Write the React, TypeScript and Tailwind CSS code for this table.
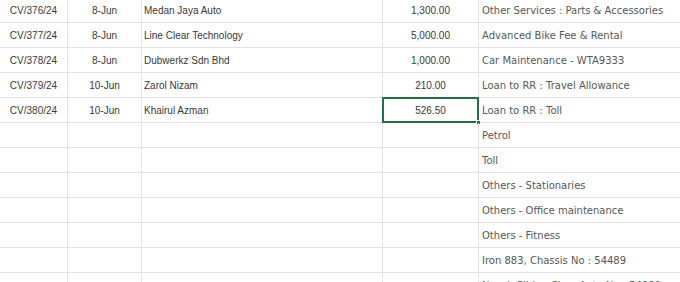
import React from "react";

type Row = { a: string; b: string; c: string; d: string; e: string };

const rows: Row[] = [
  { a: "CV/376/24", b: "8-Jun", c: "Medan Jaya Auto", d: "1,300.00", e: "Other Services : Parts & Accessories" },
  { a: "CV/377/24", b: "8-Jun", c: "Line Clear Technology", d: "5,000.00", e: "Advanced Bike Fee & Rental" },
  { a: "CV/378/24", b: "8-Jun", c: "Dubwerkz Sdn Bhd", d: "1,000.00", e: "Car Maintenance - WTA9333" },
  { a: "CV/379/24", b: "10-Jun", c: "Zarol Nizam", d: "210.00", e: "Loan to RR : Travel Allowance" },
  { a: "CV/380/24", b: "10-Jun", c: "Khairul Azman", d: "526.50", e: "Loan to RR : Toll" },
  { a: "", b: "", c: "", d: "", e: "Petrol" },
  { a: "", b: "", c: "", d: "", e: "Toll" },
  { a: "", b: "", c: "", d: "", e: "Others - Stationaries" },
  { a: "", b: "", c: "", d: "", e: "Others - Office maintenance" },
  { a: "", b: "", c: "", d: "", e: "Others - Fitness" },
  { a: "", b: "", c: "", d: "", e: "Iron 883, Chassis No : 54489" },
  { a: "", b: "", c: "", d: "", e: "Nasuh Sibing Chey Auto No : 54890" },
];

const calibri = "font-['Liberation_Sans',sans-serif] text-[10px] text-[#3a3a3a]";
const gothic = "font-['DejaVu_Sans',sans-serif] text-[10px] text-[#585858]";

export default function App() {
  return (
    <div className="w-[680px] h-[282px] overflow-hidden bg-white">
      <div className="-mt-[2px] grid grid-cols-[68px_74px_241px_96px_201px]">
        {rows.map((r, i) => (
          <React.Fragment key={i}>
            <div className={`h-[25px] border-r border-b border-[#e2e2e2] flex items-center justify-center ${calibri}`}>{r.a}</div>
            <div className={`h-[25px] border-r border-b border-[#e2e2e2] flex items-center justify-center ${calibri}`}>{r.b}</div>
            <div className={`h-[25px] border-r border-b border-[#e2e2e2] flex items-center pl-[2px] whitespace-nowrap ${calibri}`}>{r.c}</div>
            <div className={`relative h-[25px] border-r border-b border-[#e2e2e2] flex items-center justify-center ${calibri}`}>
              {r.d}
              {i === 4 && (
                <>
                  <div className="absolute -left-[1px] -top-[1px] w-[97px] h-[26px] border-2 border-[#217346]" />
                  <div className="absolute -right-[3px] -bottom-[3px] w-[5px] h-[5px] bg-[#217346] border border-white" />
                </>
              )}
            </div>
            <div className={`h-[25px] border-b border-[#e2e2e2] flex items-center pl-[3px] whitespace-nowrap ${gothic}`}>{r.e}</div>
          </React.Fragment>
        ))}
      </div>
    </div>
  );
}
